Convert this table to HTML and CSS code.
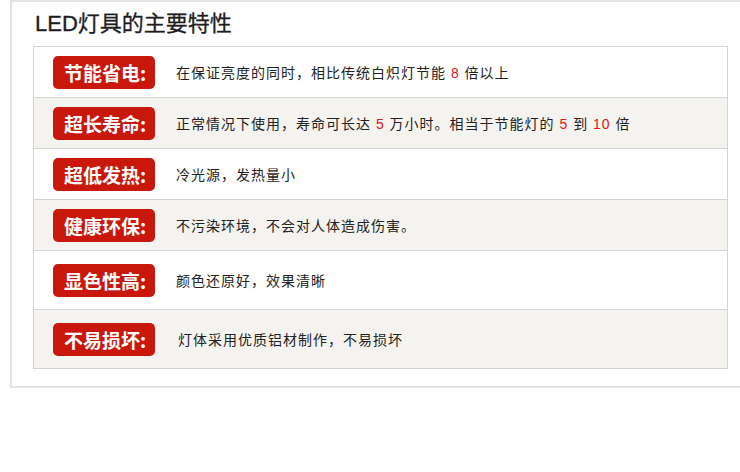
FILE: index.html
```html
<!DOCTYPE html>
<html>
<head>
<meta charset="utf-8">
<title>LED灯具的主要特性</title>
<link rel="stylesheet" href="styles.css">
</head>
<body>
<div class="frame">
    <h1>LED灯具的主要特性</h1>
    <div class="table">
        <div class="row">
            <span class="badge">节能省电:</span>
            <p>在保证亮度的同时，相比传统白炽灯节能 <em>8</em> 倍以上</p>
        </div>
        <div class="row alt">
            <span class="badge">超长寿命:</span>
            <p>正常情况下使用，寿命可长达 <em>5</em> 万小时。相当于节能灯的 <em>5</em> 到 <em>10</em> 倍</p>
        </div>
        <div class="row">
            <span class="badge">超低发热:</span>
            <p>冷光源，发热量小</p>
        </div>
        <div class="row alt">
            <span class="badge">健康环保:</span>
            <p>不污染环境，不会对人体造成伤害。</p>
        </div>
        <div class="row tall">
            <span class="badge">显色性高:</span>
            <p>颜色还原好，效果清晰</p>
        </div>
        <div class="row alt tall">
            <span class="badge">不易损坏:</span>
            <p class="shift">灯体采用优质铝材制作，不易损坏</p>
        </div>
    </div>
</div>
</body>
</html>
```

FILE: styles.css
```css
body {
    margin: 0;
    background: #fff;
    overflow: hidden;
    font-family: "Liberation Sans", "Noto Sans CJK SC", sans-serif;
    color: #222;
}

.frame {
    margin-left: 10px;
    width: 707px;
    border: 2px solid #e2e2e2;
    border-right: none;
    padding: 0 0 17px 21px;
}

h1 {
    margin: 0 0 0 2px;
    height: 44px;
    line-height: 44px;
    font-size: 22px;
    font-weight: normal;
    color: #1e1e1e;
    font-family: "Liberation Sans", "Noto Sans CJK SC", sans-serif;
    -webkit-text-stroke: 0.3px #1e1e1e;
}

.table {
    width: 693px;
    border: 1px solid #d4d4d4;
}

.row {
    display: flex;
    align-items: center;
    height: 50px;
    padding-left: 19px;
    border-bottom: 1px solid #d4d4d4;
    background: #fff;
}

.row:last-child {
    border-bottom: none;
}

.row.alt {
    background: #f4f3ef;
}

.row.tall {
    height: 58px;
}

.badge {
    box-sizing: border-box;
    width: 102px;
    height: 33px;
    line-height: 33px;
    padding-left: 11px;
    border-radius: 5px;
    background: #c9180b;
    color: #fff;
    font-size: 19px;
    font-weight: bold;
    font-family: "Noto Sans CJK SC", sans-serif;
}

p {
    margin: 0 0 0 21px;
    font-size: 14px;
    letter-spacing: 1px;
    color: #222;
    font-family: "Liberation Sans", "Noto Sans CJK SC", sans-serif;
}

p.shift {
    margin-left: 23px;
}

em {
    font-style: normal;
    color: #e3141b;
}
```
